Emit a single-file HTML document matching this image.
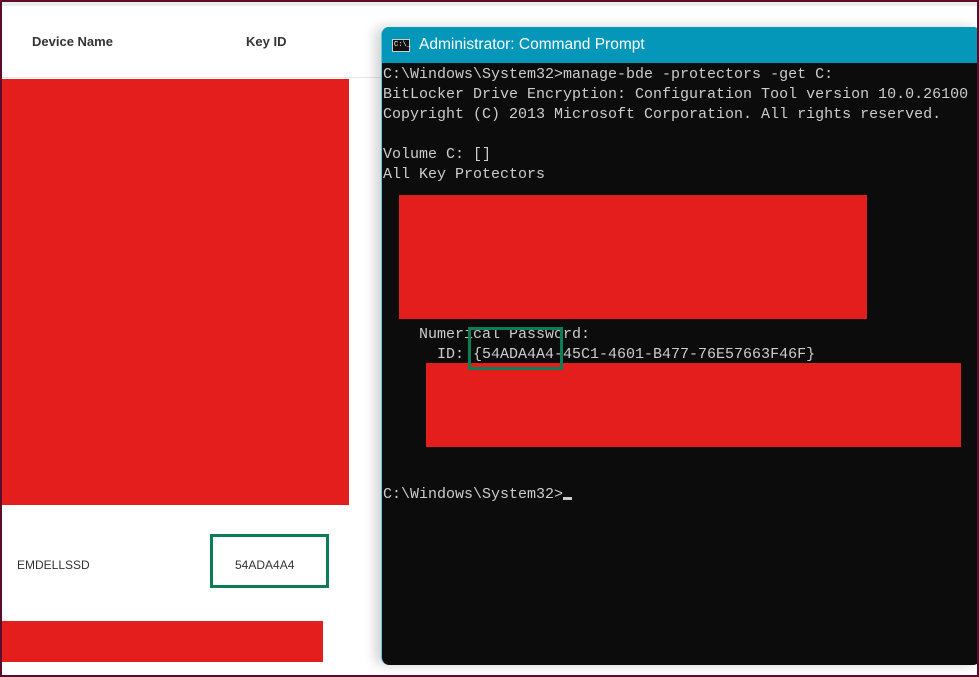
<!DOCTYPE html>
<html><head><meta charset="utf-8"><style>
*{margin:0;padding:0;box-sizing:border-box}
body{width:979px;height:677px;overflow:hidden;background:#fff;position:relative;font-family:"Liberation Sans",sans-serif}
.frame{position:absolute;inset:0;border:2px solid #5e0a2a;z-index:20;pointer-events:none}
.topline{position:absolute;left:0;top:2px;width:979px;height:4px;background:#ececec}
.abs{position:absolute}
.hdr{font-size:13px;color:#333;font-weight:bold}
.red{background:#e41d1d;position:absolute}
.cmd{position:absolute;left:381px;top:27px;width:600px;height:638px;background:#0c0c0c;border-radius:8px 8px 8px 8px;overflow:hidden;border-left:1px solid #5ec8e0;box-shadow:-6px 0 12px rgba(0,0,0,.18)}
.title{height:36px;background:#0497b9;color:#fff;font-size:15.5px;display:flex;align-items:center;padding-left:10px}
.icon{width:18px;height:13px;background:#111;border:1px solid #ccc;margin-right:9px;font:7px "Liberation Mono",monospace;color:#fff;line-height:11px;padding-left:1px}
pre{font-family:"Liberation Mono",monospace;font-size:15px;line-height:20px;color:#cccccc;padding-left:1px;padding-top:2px}
.gbox{position:absolute;border:3px solid #0c7d55}
</style></head><body>
<div class="topline"></div>
<div class="abs hdr" style="left:32px;top:34px">Device Name</div>
<div class="abs hdr" style="left:246px;top:34px">Key ID</div>
<div class="abs" style="left:0;top:77px;width:381px;height:1px;background:#e6e6e6"></div>
<div class="red" style="left:0;top:79px;width:349px;height:426px"></div>
<div class="abs" style="left:17px;top:558px;font-size:12px;color:#333">EMDELLSSD</div>
<div class="gbox" style="left:210px;top:534px;width:119px;height:54px"></div>
<div class="abs" style="left:235px;top:558px;font-size:12px;color:#333">54ADA4A4</div>
<div class="red" style="left:0;top:621px;width:323px;height:41px"></div>
<div class="cmd">
<div class="title"><div class="icon">C:\_</div>Administrator: Command Prompt</div>
<pre>C:\Windows\System32>manage-bde -protectors -get C:
BitLocker Drive Encryption: Configuration Tool version 10.0.26100
Copyright (C) 2013 Microsoft Corporation. All rights reserved.

Volume C: []
All Key Protectors







    Numerical Password:
      ID: {54ADA4A4-45C1-4601-B477-76E57663F46F}






C:\Windows\System32><span style="display:inline-block;width:9px;height:3px;background:#ccc;vertical-align:-2px"></span></pre>
</div>
<div class="red" style="left:399px;top:195px;width:468px;height:124px"></div>
<div class="red" style="left:426px;top:363px;width:535px;height:84px"></div>
<div class="gbox" style="left:468px;top:327px;width:95px;height:43px"></div>
<div class="frame"></div>
</body></html>
